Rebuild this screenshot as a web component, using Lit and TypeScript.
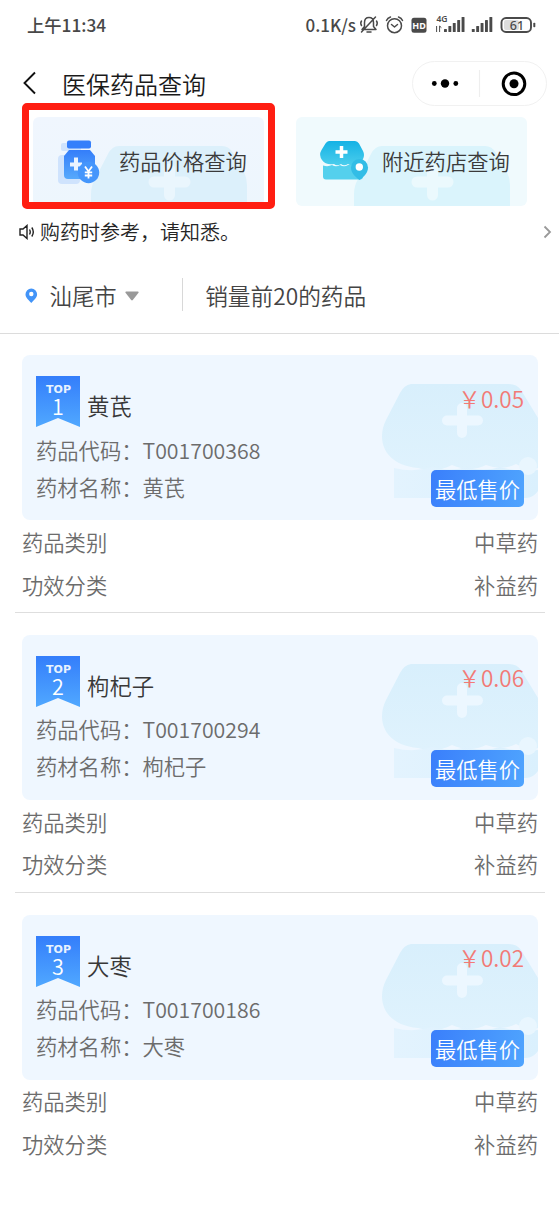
import { LitElement, html, css, svg } from "lit";
import { customElement, property } from "lit/decorators.js";

interface Drug {
  name: string;
  code: string;
  price: string;
  kind: string;
  effect: string;
}

const drugs: Drug[] = [
  { name: "黄芪", code: "T001700368", price: "0.05", kind: "中草药", effect: "补益药" },
  { name: "枸杞子", code: "T001700294", price: "0.06", kind: "中草药", effect: "补益药" },
  { name: "大枣", code: "T001700186", price: "0.02", kind: "中草药", effect: "补益药" },
];

const bars = (x: number) =>
  svg`${[3, 6, 9, 12, 15].map(
    (h, i) => svg`<rect x=${x + i * 4.4} y=${32 - h} width="2.9" height=${h} rx=".6" />`
  )}`;

@customElement("status-bar")
export class StatusBar extends LitElement {
  static styles = css`
    :host { display: flex; height: 50px; justify-content: space-between; padding-left: 27px; color: #484848; }
    .time, .speed { font-size: 17.3px; font-weight: 500; line-height: 50px; white-space: nowrap; }
    .speed { font-size: 17px; }
    .right { display: flex; }
    svg { display: block; }
    .hd { font: 700 9px "Noto Sans", sans-serif; }
    .net { font: 600 8.5px "Noto Sans", sans-serif; }
    .level { font: 500 12.5px "Noto Sans", sans-serif; }
  `;
  render() {
    return html`
      <span class="time">上午11:34</span>
      <div class="right">
        <span class="speed">0.1K/s</span>
        <svg width="203" height="50" viewBox="356 0 203 50" fill="#4a4a4a">
          <g fill="none" stroke="#4a4a4a" stroke-width="1.5" stroke-linecap="round" stroke-linejoin="round">
            <path d="M362 29.500h14l-2.500-3v-4c0-3-1.800-5-4.500-5s-4.500 2-4.500 5v4zM367 32h4M375.500 17l-14 15M361.500 21q-1.500 2 0 4.500M376.500 21q1.500 2 0 4.500" />
            <circle cx="394.5" cy="25.7" r="7" />
            <path d="M391.500 24.500l3 2.500 3-2.500M386.500 20.500q1-2.500 4-3.500M402.500 20.500q-1-2.500-4-3.500" />
          </g>
          <rect x="411.5" y="17.7" width="15" height="15" rx="2.5" />
          <text class="hd" x="419" y="28.500" text-anchor="middle" fill="#fff">HD</text>
          <text class="net" x="436.500" y="22">4G</text>
          <path d="M436.600 26v6M439.600 32v-6l1.800 1.700" fill="none" stroke="#4a4a4a" stroke-width="1" />
          ${bars(444)} ${bars(471.8)}
          <rect x="501.5" y="18" width="29.500" height="14" rx="4.500" fill="none" stroke="#4a4a4a" stroke-width="1.900" />
          <rect x="504" y="20" width="15" height="10" rx="2" fill="#ddd" />
          <rect x="533.3" y="22.8" width="2" height="4.5" rx=".8" />
          <text class="level" x="517" y="29.600" text-anchor="middle">61</text>
        </svg>
      </div>
    `;
  }
}

@customElement("nav-bar")
export class NavBar extends LitElement {
  static styles = css`
    :host { display: flex; align-items: center; height: 66.5px; padding: 0 12.5px 0 22px; }
    svg { display: block; }
    .title { font-size: 24px; line-height: 34px; margin: 1px 0 0 24px; color: #1a1a1a; flex: 1; }
    .capsule { box-sizing: border-box; width: 135px; height: 45px; border: 1px solid #f1f1f1; border-radius: 23px; }
  `;
  render() {
    return html`
      <svg width="16" height="24" viewBox="0 0 16 24"><path d="M13 1.5L2.5 12 13 22.5" fill="none" stroke="#111" stroke-width="1.9" /></svg>
      <span class="title">医保药品查询</span>
      <div class="capsule">
        <svg width="133" height="43" viewBox="413 62 133 43">
          <circle cx="434.3" cy="83.5" r="2.4" /><circle cx="445" cy="83.5" r="4.200" /><circle cx="455.8" cy="83.5" r="2.400" />
          <path d="M479.5 70v27" stroke="#eee" stroke-width="1.2" />
          <circle cx="514" cy="83.8" r="10.8" fill="none" stroke="#000" stroke-width="3" /><circle cx="514" cy="83.8" r="4.5" />
        </svg>
      </div>
    `;
  }
}

@customElement("entry-tile")
export class EntryTile extends LitElement {
  @property() kind = "price";
  @property() label = "";
  static styles = css`
    :host { display: grid; width: 231px; height: 89px; border-radius: 6px; overflow: hidden; background: linear-gradient(#f0f6fe, #edf6fd); }
    :host([kind="store"]) { background: #f0fafd; }
    svg, .label { grid-area: 1 / 1; }
    .label { padding-left: 86px; font-size: 21.3px; line-height: 88px; color: #3a3a3a; white-space: nowrap; }
  `;
  render() {
    const price = this.kind === "price";
    return html`
      <svg width="231" height="89" viewBox="0 0 231 89">
        <defs>
          <linearGradient id="b" x2="0" y2="1"><stop stop-color="#347efa" /><stop offset="1" stop-color="#57a9fc" /></linearGradient>
          <linearGradient id="c" x2="0" y2="1"><stop stop-color="#14b2e5" /><stop offset="1" stop-color="#4bcdec" /></linearGradient>
        </defs>
        <path d="M86 29h103q7 0 11 7l11 19q3 6 3 13v21H58V77q0-8 4-15l13-25q4-8 11-8z" fill=${price ? "#dcf0fb" : "#daf4fc"} />
        <path d="M136.500 52v26M121 65h31" stroke=${price ? "#eaf6fd" : "#ebf9fd"} stroke-width="11" stroke-linecap="round" />
        ${price
          ? svg`
            <g fill="#cfe3fd"><rect x="28" y="26" width="20" height="8" rx="2" /><rect x="25" y="38" width="22" height="29" rx="4" /></g>
            <rect x="34" y="23.500" width="24" height="8" rx="2" fill="#357ffb" />
            <path d="M36 33h21l5 6v19a4 4 0 0 1-4 4H35a4 4 0 0 1-4-4V39z" fill="url(#b)" />
            <path d="M43 40.500v13M37 47.500h12" stroke="#eaf4ff" stroke-width="4" />
            <circle cx="55.500" cy="55.500" r="10.700" fill="#4596fc" />
            <path d="M52 49.500l3.500 4.900 3.500-4.900M55.500 54v7.500M51.800 55.300h7.400M51.800 58.500h7.400" fill="none" stroke="#fff" stroke-width="1.800" />`
          : svg`
            <path d="M33 24h26q2.500 0 4 2.500l4 7.500q2 4 0 8-2.500 5-8 5-3.500 2.500-7 0-4 2.500-7 0-4 2.500-7 0-8 1.500-12-4-3.500-5-.5-10l4-6.500q1.500-2.500 3.500-2.500z" fill="url(#c)" />
            <path d="M27 48.500q5 1.500 9-.500 4 2.500 8 0 4 2.500 8 0h15v11q0 3.500-3 3.500H30q-3 0-3-3z" fill="#54d0ed" />
            <path d="M45.5 29v12M39.500 35h12" stroke="#fff" stroke-width="3.500" />
            <path d="M63.500 63c-5.500-4-8.500-8-8.500-12.500a8.500 8.500 0 0 1 17 0c0 4.500-3 8.500-8.500 12.500z" fill="#32bde6" />
            <circle cx="63.300" cy="50" r="3.700" fill="#fff" />`}
      </svg>
      <span class="label">${this.label}</span>
    `;
  }
}

@customElement("drug-item")
export class DrugItem extends LitElement {
  @property({ type: Object }) drug!: Drug;
  @property({ type: Number }) rank = 1;
  @property({ type: Boolean, reflect: true }) last = false;
  static styles = css`
    :host { display: block; box-sizing: border-box; height: 279.6px; margin: 0 14px 0 15px; padding: 21.9px 7px 0; border-bottom: 1.5px solid #dedede; color: #6c6c6c; font-size: 21.3px; }
    :host([last]) { border-color: transparent; }
    .card { display: grid; height: 165px; border-radius: 8px; overflow: hidden; background: #eff7ff; }
    .art, .body { grid-area: 1 / 1; }
    .art { justify-self: end; display: block; }
    .body { display: flex; justify-content: space-between; padding: 0 14px; }
    .head { display: flex; height: 54.5px; padding-top: 21px; }
    .head svg { display: block; }
    .top { font: 700 11px "DejaVu Sans", sans-serif; }
    .rank { font-size: 21.5px; }
    .name { margin-left: 7px; font-size: 22.4px; line-height: 58px; color: #383838; }
    .line { line-height: 37px; white-space: nowrap; }
    .side { display: flex; flex-direction: column; align-items: flex-end; }
    .price { margin-top: 25.500px; line-height: 34px; font-size: 22.5px; color: #f27a76; }
    .tag { margin-top: 55.5px; width: 93px; height: 37px; line-height: 37px; border-radius: 5px; text-align: center; color: #fff; background: linear-gradient(100deg, #3a7ffb, #4fa4fe); white-space: nowrap; }
    .row { display: flex; justify-content: space-between; line-height: 42.5px; }
    .rows { padding-top: .7px; }
  `;
  render() {
    const d = this.drug;
    return html`
      <div class="card">
        <svg class="art" width="160" height="165" viewBox="378 355 160 165">
          <defs>
            <linearGradient id="a" x2="0" y2="1"><stop stop-color="#d8effc" /><stop offset="1" stop-color="#dff2fd" /></linearGradient>
            <linearGradient id="w"><stop stop-color="#e3f3fe" /><stop offset="1" stop-color="#daf0fd" /></linearGradient>
          </defs>
          <path d="M411 384h98q8 0 12 6l17 28v50q-12 2-22-4-14 7-30 1-16 8-34 0-17 9-34 3c-34-3-42-28-32-48l14-27q4-8 11-9z" fill="url(#a)" />
          <path d="M394 468q20 5 38-1 18 5 34 0 18 5 34 0 16 5 38 3v21q-5 7-12 7H394z" fill="url(#w)" />
          <path d="M462 408v25M447 420.500h31" stroke="#ecf7ff" stroke-width="10" stroke-linecap="round" />
          <circle cx="528" cy="466" r="9" fill="#e9f6fe" />
        </svg>
        <div class="body">
          <div>
            <div class="head">
              <svg width="44" height="51" viewBox="0 0 44 51">
                <defs><linearGradient id="r" x2="0" y2="1"><stop stop-color="#347efb" /><stop offset="1" stop-color="#50a8ff" /></linearGradient></defs>
                <path d="M0 0h44v51L22 42 0 51z" fill="url(#r)" />
                <text class="top" x="22.5" y="16.500" text-anchor="middle" fill="#e8f3ff">TOP</text>
                <text class="rank" x="22" y="38.5" text-anchor="middle" fill="#fff">${this.rank}</text>
              </svg>
              <span class="name">${d.name}</span>
            </div>
            <div class="line">药品代码：${d.code}</div>
            <div class="line">药材名称：${d.name}</div>
          </div>
          <div class="side">
            <span class="price">￥${d.price}</span>
            <span class="tag">最低售价</span>
          </div>
        </div>
      </div>
      <div class="rows">
        <div class="row"><span>药品类别</span><span>${d.kind}</span></div>
        <div class="row"><span>功效分类</span><span>${d.effect}</span></div>
      </div>
    `;
  }
}

@customElement("app-root")
export class AppRoot extends LitElement {
  static styles = css`
    :host { display: block; position: relative; width: 559px; height: 1213px; overflow: hidden; background: #fff; font-family: "Noto Sans CJK SC", sans-serif; font-weight: 350; }
    .tiles { display: flex; gap: 32px; height: 89px; padding-left: 33px; }
    .mark { position: absolute; left: 22px; top: 103px; box-sizing: border-box; width: 253px; height: 106px; border: 7px solid #ff1e12; border-radius: 5px; }
    svg { display: block; }
    .notice { display: flex; align-items: center; height: 52px; padding: 0 7px 0 19px; }
    .notice span { flex: 1; margin-left: 5px; font-size: 20px; line-height: 30px; color: #262626; }
    .filter { display: flex; align-items: center; box-sizing: border-box; height: 76px; padding: 2px 0 0 25px; border-bottom: 1.5px solid #dcdcdc; font-size: 22.4px; color: #444; }
    .city, .heading { margin-top: -2px; }
    .city { padding: 0 8.500px 0 11.500px; }
    .heading { font-size: 22.7px; }
    .sep { width: 1px; height: 33px; margin: -3px 22.500px 0 42.500px; background: #d8d8d8; }
  `;
  render() {
    return html`
      <status-bar></status-bar>
      <nav-bar></nav-bar>
      <div class="tiles">
        <entry-tile kind="price" label="药品价格查询"></entry-tile>
        <entry-tile kind="store" label="附近药店查询"></entry-tile>
      </div>
      <div class="mark"></div>
      <div class="notice">
        <svg width="16" height="16" viewBox="0 0 16 16" fill="none" stroke="#222" stroke-width="1.4"><path d="M1 5h3l4-3.5v13L4 11H1zM10.500 5.500q1.500 2.500 0 5M12.800 3.500q3 4.500 0 9" /></svg>
        <span>购药时参考，请知悉。</span>
        <svg width="9" height="14" viewBox="0 0 9 14"><path d="M1.500 1.500L7 7l-5.500 5.500" fill="none" stroke="#999" stroke-width="1.800" /></svg>
      </div>
      <div class="filter">
        <svg width="13" height="16" viewBox="0 0 13 16"><path d="M6.300 15C3 11.500.5 9.500.5 6.300a5.800 5.800 0 0 1 11.600 0c0 3.200-2.500 5.200-5.800 8.700z" fill="#4294f8" /><circle cx="6.300" cy="6" r="2.200" fill="#fff" /></svg>
        <span class="city">汕尾市</span>
        <svg width="14" height="10" viewBox="0 0 14 10"><path d="M1 .5h12q1 .5.5 1.300L7.800 9q-.8.800-1.600 0L.5 1.800Q0 1 1 .5z" fill="#999" /></svg>
        <span class="sep"></span>
        <span class="heading">销量前20的药品</span>
      </div>
      ${drugs.map((d, i) => html`<drug-item .drug=${d} .rank=${i + 1} ?last=${i === drugs.length - 1}></drug-item>`)}
    `;
  }
}
